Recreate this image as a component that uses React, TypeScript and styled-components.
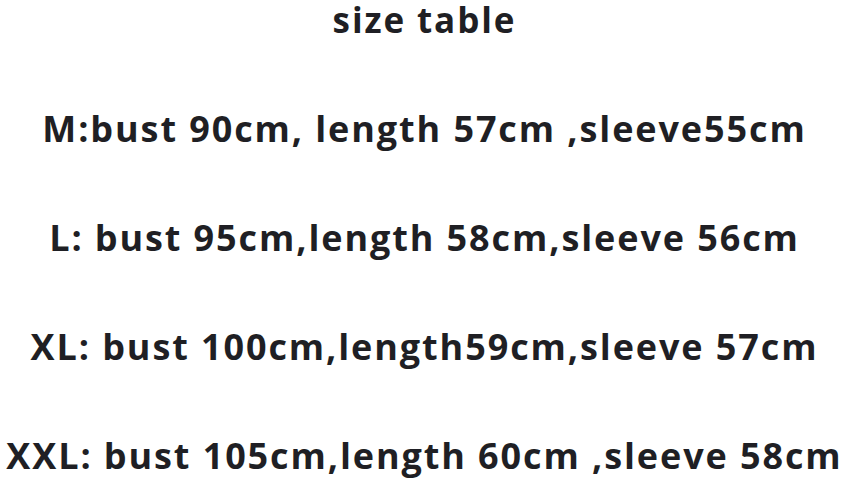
import React from 'react'
import styled, { createGlobalStyle } from 'styled-components'

const GlobalStyle = createGlobalStyle`
  html, body {
    margin: 0;
    padding: 0;
    background: #ffffff;
  }
`

const Page = styled.div`
  width: 849px;
  height: 483px;
  display: flex;
  flex-direction: column;
  align-items: center;
  font-family: 'Open Sans', Lato, sans-serif;
  font-weight: 700;
  color: #1f1f24;
  letter-spacing: 1.9px;
  overflow: hidden;
`

const Title = styled.div`
  font-size: 35px;
  line-height: 40px;
  height: 40px;
  white-space: nowrap;
`

const Row = styled.div`
  font-size: 36px;
  line-height: 40px;
  margin-top: 69px;
  white-space: nowrap;
`

const rows = [
  'M:bust 90cm, length 57cm ,sleeve55cm',
  'L: bust 95cm,length 58cm,sleeve 56cm',
  'XL: bust 100cm,length59cm,sleeve 57cm',
  'XXL: bust 105cm,length 60cm ,sleeve 58cm',
]

export default function App() {
  return (
    <>
      <GlobalStyle />
      <Page>
        <Title>size table</Title>
        {rows.map((r) => (
          <Row key={r}>{r}</Row>
        ))}
      </Page>
    </>
  )
}
